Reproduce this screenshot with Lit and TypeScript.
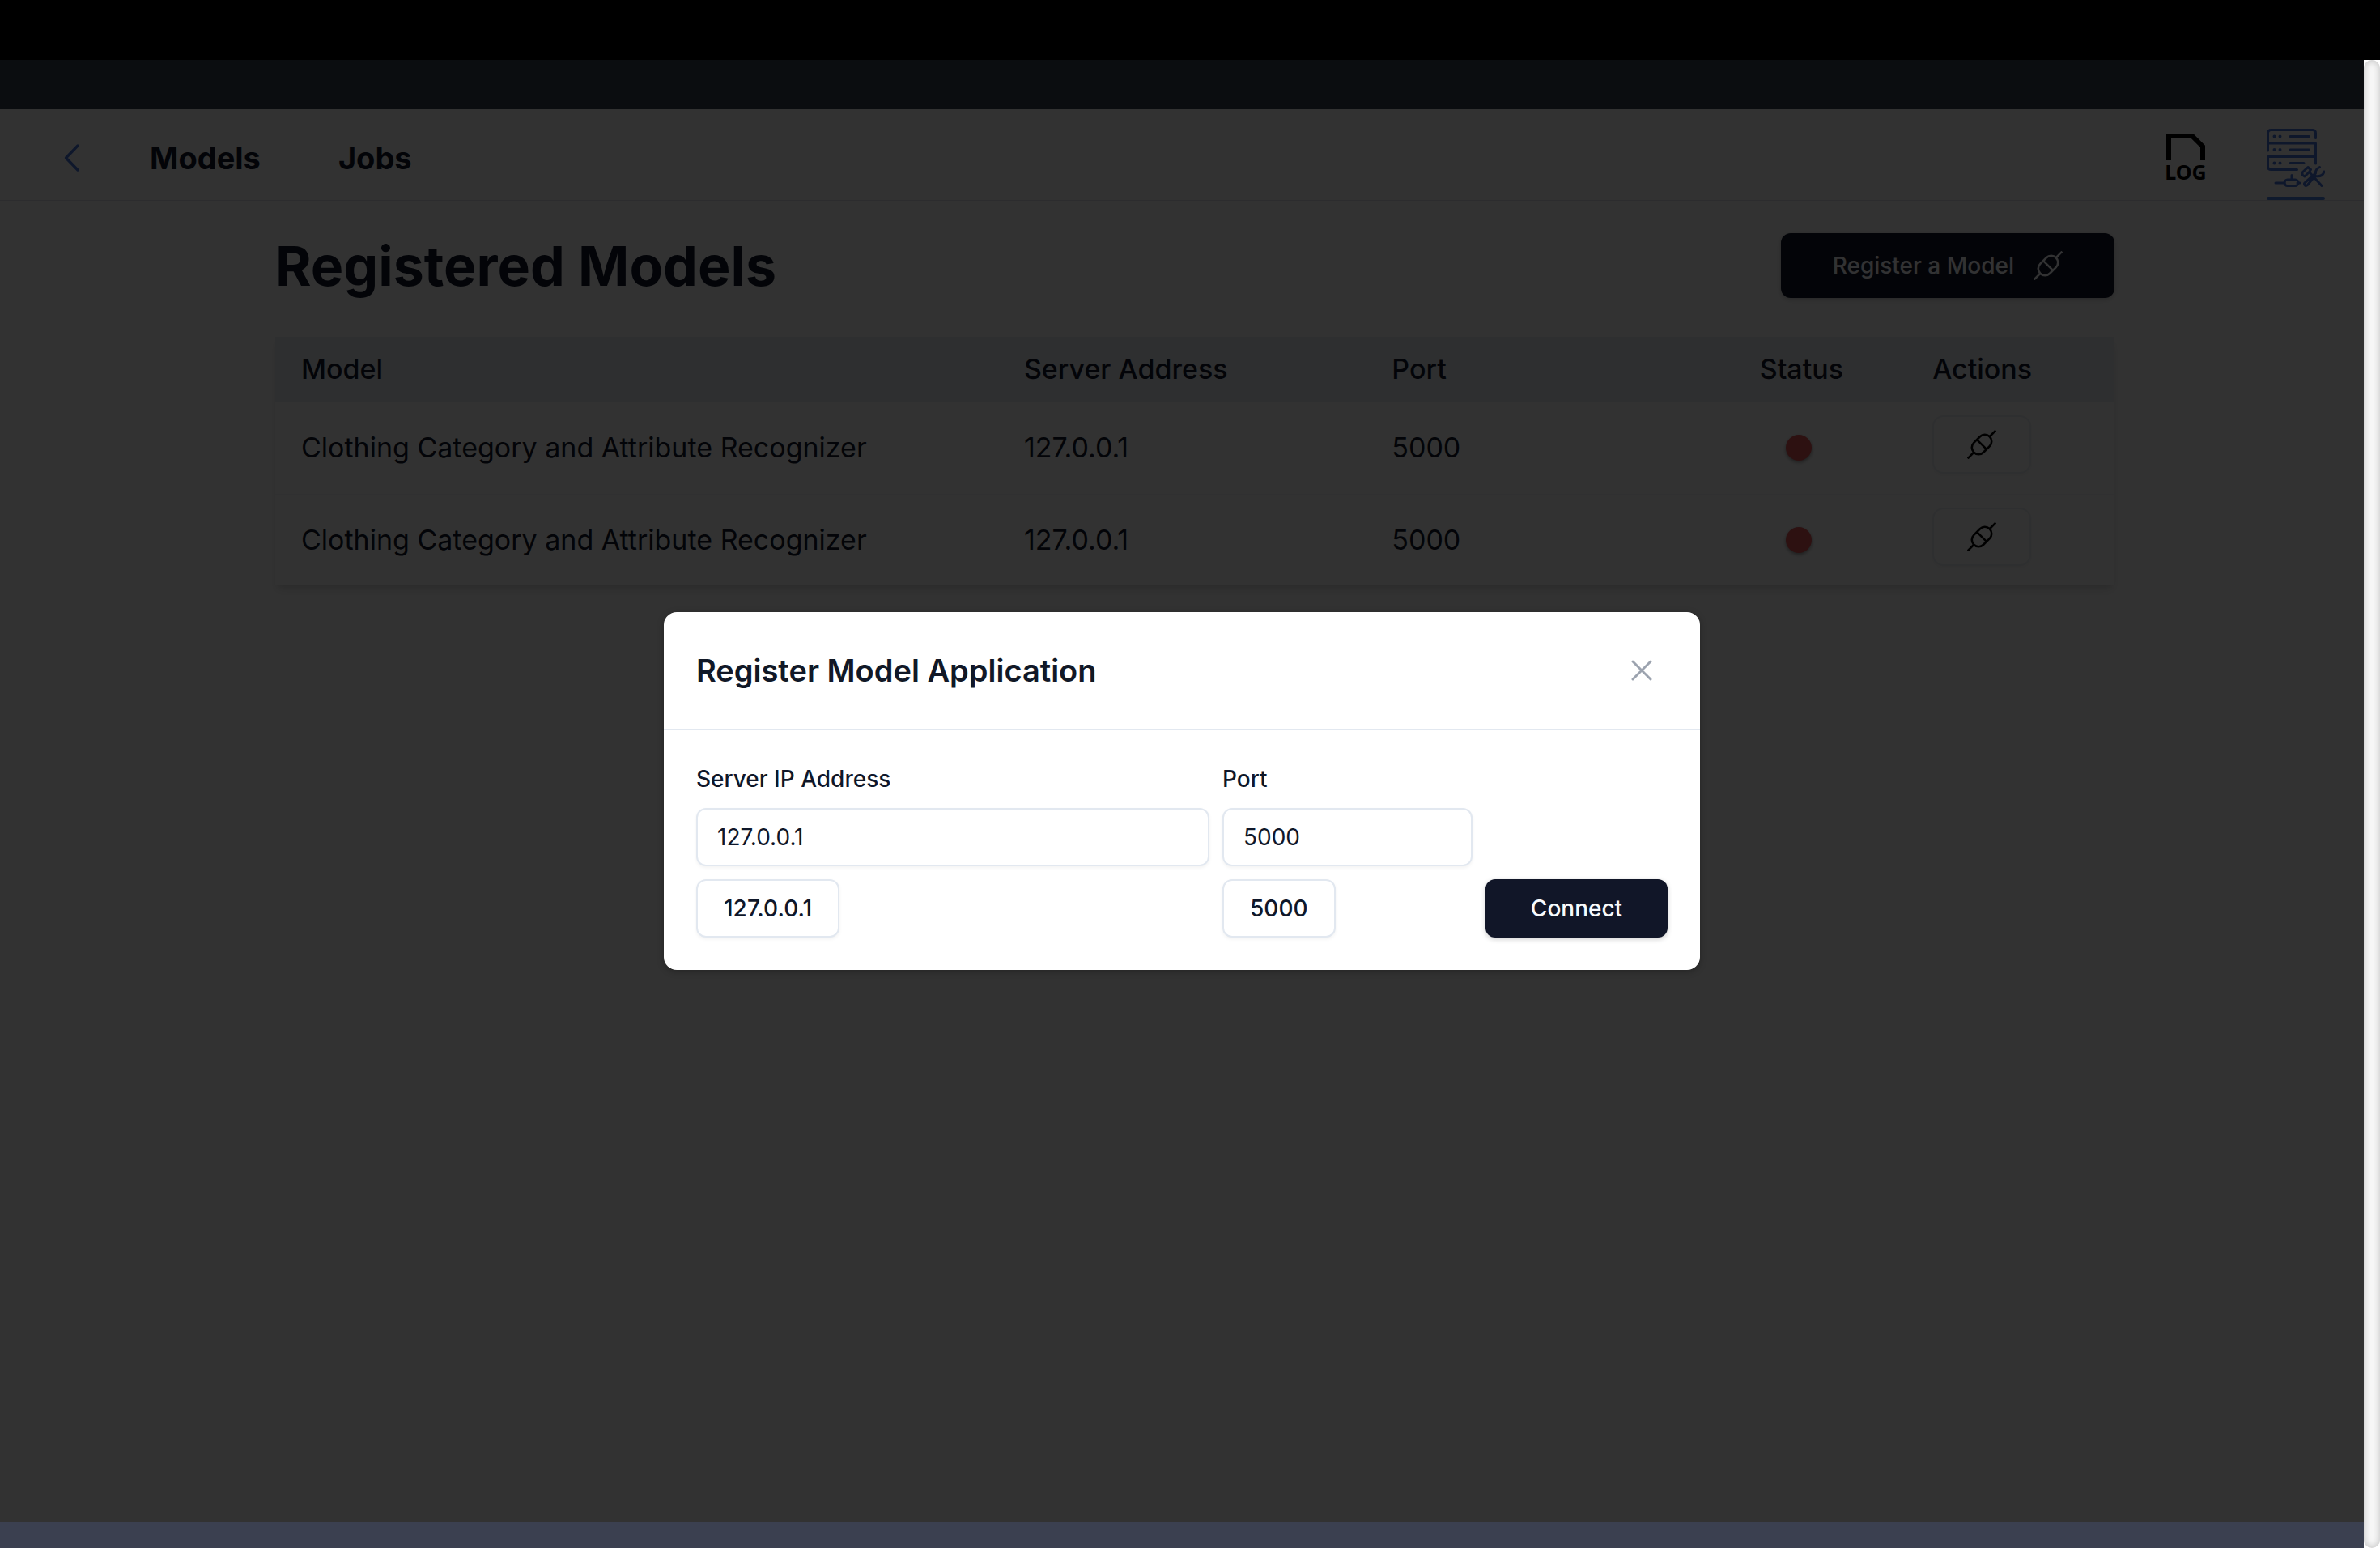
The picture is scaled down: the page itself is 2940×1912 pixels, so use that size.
import { LitElement, html, css } from "lit";
import { customElement, property, state } from "lit/decorators.js";

interface Model {
  name: string;
  address: string;
  port: number;
}

const plugIcon = html`<svg class="plug" viewBox="-18 -18 36 36" fill="none" stroke="currentColor" stroke-width="2.6" aria-hidden="true">
  <g transform="rotate(-45)">
    <rect x="-13.8" y="-8.4" width="27.6" height="16.8" rx="8.4" />
    <path d="M0 -8.4V8.4M-13.8 0H-24.5M13.8 0H24.5" />
  </g>
</svg>`;

@customElement("nav-bar")
export class NavBar extends LitElement {
  static styles = css`
    :host { display: block; }
    .bar {
      display: flex;
      align-items: center;
      height: 113px;
      box-sizing: border-box;
      padding: 8px 48px 0 79px;
      border-bottom: 1px solid #d9dde3;
      background: #fafafa;
    }
    .back {
      display: flex;
      padding: 0;
      border: 0;
      background: none;
      color: #4872d8;
      margin-right: 86px;
    }
    .links { display: flex; gap: 96px; flex: 1; }
    .link { font-size: 38px; line-height: 48px; font-weight: 700; color: #0f172a; text-decoration: none; }
    .tools { display: flex; align-items: stretch; gap: 75px; height: 100%; }
    .tool { display: flex; flex-direction: column; color: #000; text-decoration: none; padding-top: 16px; box-sizing: border-box; }
    .log { align-items: center; padding-top: 22px; width: 50px; }
    .log-text { font: 700 25px/28px "Noto Sans", sans-serif; }
    .tool.active { color: #4872d8; }
    .marker { height: 4px; margin-top: 12px; border-radius: 2px; background: #4a80e0; }
  `;

  render() {
    return html`<nav class="bar">
      <button class="back" aria-label="Back">
        <svg width="20" height="36" viewBox="0 0 20 36" fill="none" stroke="currentColor" stroke-width="3.4" stroke-linecap="round" stroke-linejoin="round"><path d="M17 3L2.500 18L17 33" /></svg>
      </button>
      <div class="links">
        <a class="link" href="#models">Models</a>
        <a class="link" href="#jobs">Jobs</a>
      </div>
      <div class="tools">
        <a class="tool log" href="#logs">
          <svg width="48" height="33" viewBox="0 0 48 33" fill="none" stroke="currentColor" stroke-width="6" aria-hidden="true"><path d="M3 33V3H32L45 16V33" /></svg>
          <span class="log-text">LOG</span>
        </a>
        <a class="tool active" href="#servers" aria-label="Servers">
          <svg width="72" height="72" viewBox="0 0 72 72" fill="none" stroke="currentColor" stroke-width="3" stroke-linecap="round" stroke-linejoin="round" aria-hidden="true">
            <path d="M1.500 27V5.500Q1.500 1.500 5.500 1.500H56.500Q60.500 1.500 60.500 5.500V11.500M1.500 18H60.500V43M60.500 34.500H1.500V46.500Q1.500 50.500 5.500 50.500H37.500" />
            <path d="M29 9.500H52.500M29 26H52.500M29 42.500H46" />
            <path d="M9.500 9.500h.01M16.500 9.500h.01M9.500 26h.01M16.500 26h.01M9.500 42.500h.01M16.500 42.500h.01" stroke-width="4" />
            <path d="M31 57.500V63M11 67H22M38 67H41" />
            <rect x="22" y="63" width="17" height="7.500" rx="3.700" />
            <path d="M44 54L51 47.500L54.500 50.500L52.500 53.500L47 59L44 57ZM53.500 54.500L68 70.500M60 58L50.500 69.500Q48.500 71.500 47 69.500T48 66L60.500 55Q60 50 65.500 47.500M60.500 58.500Q69 60 71 53" />
          </svg>
          <span class="marker"></span>
        </a>
      </div>
    </nav>`;
  }
}

@customElement("model-table")
export class ModelTable extends LitElement {
  @property({ attribute: false }) models: Model[] = [];

  static styles = css`
    :host { display: block; }
    .table {
      width: 100%;
      table-layout: fixed;
      border-collapse: collapse;
      font-size: 34px;
      line-height: 48px;
      color: #0f172a;
      box-shadow: 0 8px 12px -2px #0000001a, 0 4px 8px -4px #0000001a;
    }
    .head th { box-sizing: border-box; font-weight: 500; text-align: left; padding: 16px 32px 17px; }
    .head .name { width: 39.3%; }
    .head .address, .head .port { width: 20%; }
    .head .status { width: 9.4%; }
    .head { background: #e6e9ee; }
    .row { height: 113px; background: #fafafa; }
    .row + .row { border-top: 1px solid #edeff2; }
    .row td { padding: 0 32px; }
    .row .actions { vertical-align: top; padding-top: 16px; }
    .dot { display: block; width: 32px; height: 32px; margin-left: 32px; border-radius: 50%; background: #df5558; box-shadow: 0 2px 4px #0006; }
    .connect {
      display: flex;
      justify-content: center;
      align-items: center;
      width: 122px;
      height: 72px;
      box-sizing: border-box;
      padding: 0;
      border: 2px solid #e6e9ee;
      border-radius: 14px;
      background: #fafafa;
      color: #000;
      box-shadow: 0 2px 4px #0000000d;
    }
    .plug { width: 36px; height: 36px; }
  `;

  render() {
    return html`<table class="table">
      <thead>
        <tr class="head">
          <th class="name">Model</th>
          <th class="address">Server Address</th>
          <th class="port">Port</th>
          <th class="status">Status</th>
          <th>Actions</th>
        </tr>
      </thead>
      <tbody>
        ${this.models.map(
          (m) => html`<tr class="row">
            <td>${m.name}</td>
            <td>${m.address}</td>
            <td>${m.port}</td>
            <td><span class="dot" role="img" aria-label="Offline"></span></td>
            <td class="actions"><button class="connect" aria-label="Connect">${plugIcon}</button></td>
          </tr>`
        )}
      </tbody>
    </table>`;
  }
}

@customElement("register-dialog")
export class RegisterDialog extends LitElement {
  @state() private address = "127.0.0.1";
  @state() private port = "5000";

  static styles = css`
    :host { display: block; width: 1280px; max-width: 90%; }
    .dialog { border-radius: 16px; background: #fff; color: #0f172a; overflow: hidden; box-shadow: 0 2px 8px #0004; }
    .header {
      display: flex;
      justify-content: space-between;
      align-items: center;
      height: 146px;
      box-sizing: border-box;
      padding: 0 56px 0 40px;
      border-bottom: 2px solid #e2e8f0;
    }
    .title { margin: 0; font-size: 38px; line-height: 48px; font-weight: 600; color: #111827; }
    .close { display: flex; padding: 0; border: 0; background: none; color: #9ca3af; }
    .form {
      display: grid;
      grid-template-columns: 634fr 309fr 225fr;
      gap: 16px;
      padding: 40px;
      font-size: 28px;
      line-height: 40px;
      font-weight: 500;
    }
    .field { display: flex; flex-direction: column; gap: 16px; }
    .input, .preset {
      box-sizing: border-box;
      height: 72px;
      border: 2px solid #e2e8f0;
      border-radius: 12px;
      background: #fff;
      color: inherit;
      font-family: inherit;
      font-size: 28px;
      box-shadow: 0 2px 4px #0000000d;
    }
    .input { width: 100%; padding: 0 24px; font-weight: 400; }
    .preset { justify-self: start; padding: 0 32px; font-weight: 500; }
    .submit {
      grid-column: 3;
      height: 72px;
      padding: 0;
      border: 0;
      border-radius: 12px;
      background: #111628;
      color: #f8fafc;
      font-family: inherit;
      font-size: 28px;
      font-weight: 500;
      box-shadow: 0 2px 6px #0003;
    }
  `;

  render() {
    return html`<section class="dialog" role="dialog" aria-labelledby="title">
      <header class="header">
        <h2 class="title" id="title">Register Model Application</h2>
        <button class="close" aria-label="Close">
          <svg width="32" height="32" viewBox="0 0 32 32" fill="none" stroke="currentColor" stroke-width="3" stroke-linecap="round"><path d="M5 5L27 27M27 5L5 27" /></svg>
        </button>
      </header>
      <form class="form" @submit=${(e: Event) => e.preventDefault()}>
        <div class="field">
          <label for="address">Server IP Address</label>
          <input class="input" id="address" .value=${this.address} @input=${(e: Event) => (this.address = (e.target as HTMLInputElement).value)} />
        </div>
        <div class="field">
          <label for="port">Port</label>
          <input class="input" id="port" .value=${this.port} @input=${(e: Event) => (this.port = (e.target as HTMLInputElement).value)} />
        </div>
        <span></span>
        <button class="preset" type="button" @click=${() => (this.address = "127.0.0.1")}>127.0.0.1</button>
        <button class="preset" type="button" @click=${() => (this.port = "5000")}>5000</button>
        <button class="submit" type="submit">Connect</button>
      </form>
    </section>`;
  }
}

@customElement("app-root")
export class AppRoot extends LitElement {
  private models: Model[] = [
    { name: "Clothing Category and Attribute Recognizer", address: "127.0.0.1", port: 5000 },
    { name: "Clothing Category and Attribute Recognizer", address: "127.0.0.1", port: 5000 },
  ];

  static styles = css`
    :host {
      display: grid;
      grid-template: 74px minmax(0, 1fr) / minmax(0, 1fr) 20px;
      height: 100vh;
      font-family: Inter, "Liberation Sans", sans-serif;
      background: #000;
    }
    .view { grid-row: 2; display: flex; flex-direction: column; }
    .page { flex: 1; position: relative; background: #fafafa; }
    .titlebar { height: 61px; background: #3b4050; }
    .content { padding: 40px 308px 0 340px; }
    .top { display: flex; justify-content: space-between; align-items: center; height: 80px; margin-bottom: 48px; }
    .heading { margin: 0; font-size: 68px; line-height: 80px; font-weight: 700; color: #0f172a; }
    .register {
      display: flex;
      align-items: center;
      gap: 24px;
      height: 80px;
      padding: 0 64px;
      border: 0;
      border-radius: 12px;
      background: #0f172a;
      color: #f8fafc;
      font-family: inherit;
      font-size: 28px;
      font-weight: 500;
      box-shadow: 0 2px 6px #0003;
    }
    .plug { width: 36px; height: 36px; }
    .overlay { position: absolute; inset: 0; display: flex; align-items: center; justify-content: center; background: #000c; }
    .statusbar { height: 32px; background: #3b4050; }
    .track { grid-row: 2; grid-column: 2; background: #fff; }
    .thumb { height: 100%; border-radius: 10px; background: #f7f7f7; box-shadow: inset 0 0 8px 1px #0003; }
  `;

  render() {
    return html`
      <div class="view">
        <div class="page">
          <div class="titlebar"></div>
          <nav-bar></nav-bar>
          <main class="content">
            <div class="top">
              <h1 class="heading">Registered Models</h1>
              <button class="register">Register a Model ${plugIcon}</button>
            </div>
            <model-table .models=${this.models}></model-table>
          </main>
          <div class="overlay"><register-dialog></register-dialog></div>
        </div>
        <div class="statusbar"></div>
      </div>
      <div class="track"><div class="thumb"></div></div>
    `;
  }
}
